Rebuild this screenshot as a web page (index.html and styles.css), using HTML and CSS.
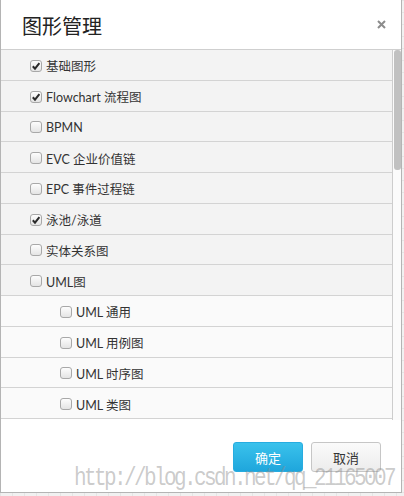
FILE: index.html
```html
<!DOCTYPE html>
<html lang="zh-CN">
<head>
<meta charset="utf-8">
<title>图形管理</title>
<link rel="stylesheet" href="styles.css">
</head>
<body>
<div class="dialog">
  <div class="header">
    <h1 class="title">图形管理</h1>
    <svg class="close" width="9" height="9" viewBox="0 0 9 9"><path d="M1 1 L8 8 M8 1 L1 8" stroke="#8c8c8c" stroke-width="2" fill="none"/></svg>
  </div>
  <div class="list">
    <div class="rows">
      <div class="row"><span class="cb"><svg viewBox="0 0 12 12"><path d="M2.8 6.2 L5 8.6 L9.4 3.2" stroke="#2a2a2a" stroke-width="2" fill="none"/></svg></span>基础图形</div>
      <div class="row"><span class="cb"><svg viewBox="0 0 12 12"><path d="M2.8 6.2 L5 8.6 L9.4 3.2" stroke="#2a2a2a" stroke-width="2" fill="none"/></svg></span>Flowchart 流程图</div>
      <div class="row"><span class="cb"></span>BPMN</div>
      <div class="row"><span class="cb"></span>EVC 企业价值链</div>
      <div class="row"><span class="cb"></span>EPC 事件过程链</div>
      <div class="row"><span class="cb"><svg viewBox="0 0 12 12"><path d="M2.8 6.2 L5 8.6 L9.4 3.2" stroke="#2a2a2a" stroke-width="2" fill="none"/></svg></span>泳池/泳道</div>
      <div class="row"><span class="cb"></span>实体关系图</div>
      <div class="row"><span class="cb"></span>UML图</div>
      <div class="row sub"><span class="cb"></span>UML 通用</div>
      <div class="row sub"><span class="cb"></span>UML 用例图</div>
      <div class="row sub"><span class="cb"></span>UML 时序图</div>
      <div class="row sub"><span class="cb"></span>UML 类图</div>
    </div>
    <div class="scrollbar"><div class="thumb"></div></div>
  </div>
  <div class="footer">
    <button class="btn primary">确定</button>
    <button class="btn">取消</button>
  </div>
</div>
<div class="watermark">http://blog.csdn.net/qq_21165007</div>
</body>
</html>
```
FILE: styles.css
```css
html, body {
  margin: 0;
  padding: 0;
}
body {
  width: 404px;
  height: 496px;
  overflow: hidden;
  position: relative;
  background-color: #f1f1f1;
  background-image:
    linear-gradient(90deg, rgba(0,0,0,0.05) 1px, transparent 1px),
    linear-gradient(rgba(0,0,0,0.05) 1px, transparent 1px);
  background-size: 12px 12px;
  font-family: Lato, "Noto Sans CJK SC", sans-serif;
  color: #333;
}
.dialog {
  box-sizing: border-box;
  width: 402px;
  height: 493px;
  background: #fff;
  border: 1px solid #b4b4b4;
  border-top: none;
  display: flex;
  flex-direction: column;
}
.header {
  height: 49px;
  border-bottom: 1px solid #cfcfcf;
  display: flex;
  align-items: center;
  justify-content: space-between;
  padding: 0 15px 0 21px;
  flex: none;
}
.title {
  margin: 0;
  padding-top: 3px;
  font-family: "Noto Sans CJK SC", sans-serif;
  font-weight: normal;
  font-size: 20px;
  line-height: 24px;
  color: #222;
}
.close {
  display: block;
}
.list {
  height: 370px;
  display: flex;
  flex: none;
}
.rows {
  flex: 1;
  border-right: 1px solid #cdcdcd;
  overflow: hidden;
}
.row {
  box-sizing: border-box;
  height: 30.75px;
  border-bottom: 1px solid #d3d3d3;
  background: #f3f3f3;
  display: flex;
  align-items: center;
  padding-left: 29px;
  padding-top: 2px;
  font-size: 12.5px;
  color: #333;
  white-space: nowrap;
}
.row.sub {
  background: #fafafa;
  padding-left: 59px;
}
.cb {
  box-sizing: border-box;
  width: 12px;
  height: 12px;
  border: 1px solid #a8a8a8;
  border-radius: 3px;
  background: linear-gradient(#fdfdfd, #e4e4e4);
  margin-right: 4px;
  position: relative;
  flex: none;
}
.cb svg {
  position: absolute;
  left: -1px;
  top: -1px;
  width: 12px;
  height: 12px;
}
.scrollbar {
  width: 8px;
  position: relative;
  background: #fbfbfb;
}
.thumb {
  position: absolute;
  left: 1px;
  top: 0;
  width: 7px;
  height: 120px;
  background: #c1c1c1;
  border-radius: 3px;
}
.footer {
  flex: 1;
  display: flex;
  justify-content: flex-end;
  align-items: flex-start;
  gap: 8px;
  padding: 22px 20px 0 0;
}
.btn {
  box-sizing: border-box;
  width: 70px;
  height: 30px;
  border-radius: 3px;
  font-family: "Noto Sans CJK SC", sans-serif;
  font-size: 13px;
  border: 1px solid #c6c6c6;
  background: linear-gradient(#fafafa, #ececec);
  color: #333;
  padding: 0;
}
.btn.primary {
  border: 1px solid #27ace0;
  background: linear-gradient(#3ac2ec, #1fa6dc);
  color: #fff;
}
.watermark {
  position: absolute;
  left: 74px;
  top: 465px;
  font-family: "Liberation Mono", monospace;
  font-size: 21px;
  letter-spacing: -2.6px;
  color: rgba(140, 140, 140, 0.45);
  transform: scaleY(1.2);
  transform-origin: left top;
  white-space: nowrap;
  pointer-events: none;
}
```
